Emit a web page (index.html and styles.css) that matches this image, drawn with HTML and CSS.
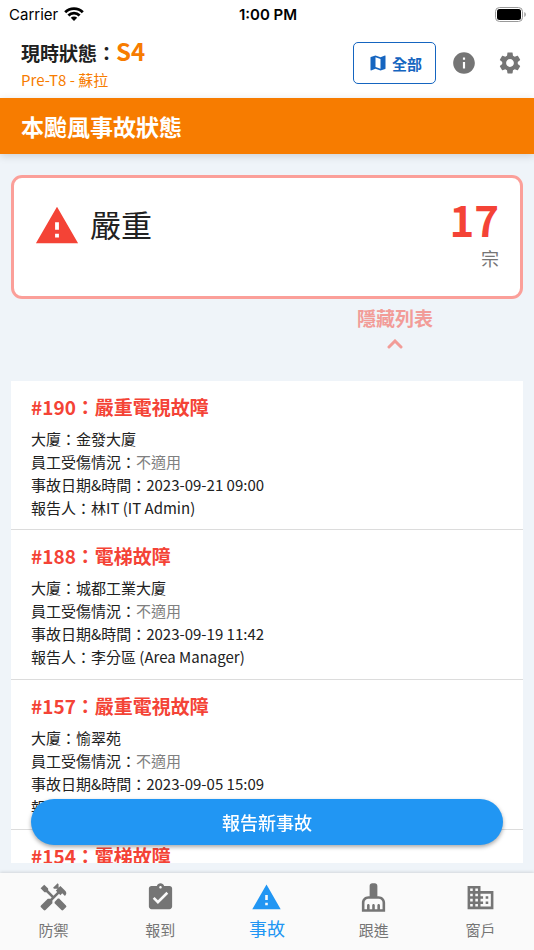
FILE: index.html
```html
<!DOCTYPE html>
<html lang="zh-Hant">
<head>
    <meta charset="UTF-8">
    <meta name="viewport" content="width=device-width, initial-scale=1.0">
    <title>本颱風事故狀態</title>
    <link rel="stylesheet" href="styles.css">
</head>
<body>
    <!-- Phone status bar -->
    <div class="status-bar">
        <div class="carrier">
            <span>Carrier</span>
            <svg class="wifi" viewBox="0 0 20 14">
                <path d="M1.2 5.2a12.4 12.4 0 0 1 17.6 0M4.4 8.4a7.9 7.9 0 0 1 11.2 0" fill="none" stroke="#000" stroke-width="2.8"/>
                <path d="M10 14l-3.2-3.3a4.6 4.6 0 0 1 6.4 0z"/>
            </svg>
        </div>
        <span class="clock">1:00 PM</span>
        <svg class="battery" viewBox="0 0 32 15">
            <rect x="0.5" y="0.5" width="27" height="14" rx="4" fill="none" stroke="#999"/>
            <rect x="2" y="2" width="24" height="11" rx="2.5"/>
            <path d="M29.3 5v5c2-.8 2-4.2 0-5z" fill="#999"/>
        </svg>
    </div>

    <header class="top-bar">
        <div class="current">
            <p class="state">現時狀態：<strong>S4</strong></p>
            <p class="typhoon">Pre-T8 - 蘇拉</p>
        </div>
        <button class="all-button">
            <svg viewBox="0 0 24 24"><path d="M20.5 3l-.16.03L15 5.1 9 3 3.36 4.9c-.21.07-.36.25-.36.48V20.5c0 .28.22.5.5.5l.16-.03L9 18.9l6 2.1 5.64-1.9c.21-.07.36-.25.36-.48V3.5c0-.28-.22-.5-.5-.5zM15 19l-6-2.11V5l6 2.11V19z"/></svg>
            全部
        </button>
        <button class="icon-button" aria-label="資訊">
            <svg viewBox="0 0 24 24"><path d="M12 2C6.48 2 2 6.48 2 12s4.48 10 10 10 10-4.48 10-10S17.52 2 12 2zm1 15h-2v-6h2v6zm0-8h-2V7h2v2z"/></svg>
        </button>
        <button class="icon-button" aria-label="設定">
            <svg viewBox="0 0 24 24"><path d="M19.14 12.94c.04-.3.06-.61.06-.94 0-.32-.02-.64-.07-.94l2.03-1.58c.18-.14.23-.41.12-.61l-1.92-3.32c-.12-.22-.37-.29-.59-.22l-2.39.96c-.5-.38-1.03-.7-1.62-.94l-.36-2.54c-.04-.24-.24-.41-.48-.41h-3.84c-.24 0-.43.17-.47.41l-.36 2.54c-.59.24-1.13.57-1.62.94l-2.39-.96c-.22-.08-.47 0-.59.22L2.74 8.87c-.12.21-.08.47.12.61l2.03 1.58c-.05.3-.09.63-.09.94s.02.64.07.94l-2.03 1.58c-.18.14-.23.41-.12.61l1.92 3.32c.12.22.37.29.59.22l2.39-.96c.5.38 1.03.7 1.62.94l.36 2.54c.05.24.24.41.48.41h3.84c.24 0 .44-.17.47-.41l.36-2.54c.59-.24 1.13-.56 1.62-.94l2.39.96c.22.08.47 0 .59-.22l1.92-3.32c.12-.22.07-.47-.12-.61l-2.01-1.58zM12 15.6c-1.98 0-3.6-1.62-3.6-3.6s1.62-3.6 3.6-3.6 3.6 1.62 3.6 3.6-1.62 3.6-3.6 3.6z"/></svg>
        </button>
    </header>

    <h1 class="banner">本颱風事故狀態</h1>

    <main>
        <section class="summary">
            <svg class="warning" viewBox="0 0 24 24"><path d="M1 21h22L12 2 1 21zm12-3h-2v-2h2v2zm0-4h-2v-4h2v4z"/></svg>
            <h2>嚴重</h2>
            <div class="count">
                <strong>17</strong>
                <span>宗</span>
            </div>
        </section>

        <button class="toggle">
            隱藏列表
            <svg viewBox="0 0 16 10"><path d="M2 8l6-6 6 6"/></svg>
        </button>

        <!-- Incident list -->
        <ul class="incidents">
            <li>
                <h3>#190：嚴重電視故障</h3>
                <p>大廈：金發大廈</p>
                <p>員工受傷情況：<span class="muted">不適用</span></p>
                <p>事故日期&amp;時間：2023-09-21 09:00</p>
                <p>報告人：林IT (IT Admin)</p>
            </li>
            <li>
                <h3>#188：電梯故障</h3>
                <p>大廈：城都工業大廈</p>
                <p>員工受傷情況：<span class="muted">不適用</span></p>
                <p>事故日期&amp;時間：2023-09-19 11:42</p>
                <p>報告人：李分區 (Area Manager)</p>
            </li>
            <li>
                <h3>#157：嚴重電視故障</h3>
                <p>大廈：愉翠苑</p>
                <p>員工受傷情況：<span class="muted">不適用</span></p>
                <p>事故日期&amp;時間：2023-09-05 15:09</p>
                <p>報告人：</p>
            </li>
            <li>
                <h3>#154：電梯故障</h3>
            </li>
        </ul>

        <button class="report-button">報告新事故</button>
    </main>

    <nav class="tabs">
        <a href="#">
            <svg viewBox="0 0 24 24"><path d="M21.67 18.17l-5.3-5.3h-.99l-2.54 2.54v.99l5.3 5.3c.39.39 1.02.39 1.41 0l2.12-2.12a.996.996 0 0 0 0-1.41z"/><path d="M17.34 10.19l1.41-1.41 2.12 2.12a3 3 0 0 0 0-4.24l-3.54-3.54-1.41 1.41V1.71L15.22 1l-3.54 3.54.71.71h2.83l-1.41 1.41 1.06 1.06-2.89 2.89-4.13-4.13V5.06L4.83 2.04 2 4.87 5.03 7.9h1.41l4.13 4.13-.85.85H7.6l-5.3 5.3a.996.996 0 0 0 0 1.41l2.12 2.12c.39.39 1.02.39 1.41 0l5.3-5.3v-2.12l5.15-5.15 1.06 1.05z"/></svg>
            防禦
        </a>
        <a href="#">
            <svg viewBox="0 0 24 24"><path d="M19 3h-4.18C14.4 1.84 13.3 1 12 1c-1.3 0-2.4.84-2.82 2H5c-1.1 0-2 .9-2 2v14c0 1.1.9 2 2 2h14c1.1 0 2-.9 2-2V5c0-1.1-.9-2-2-2zm-7 0c.55 0 1 .45 1 1s-.45 1-1 1-1-.45-1-1 .45-1 1-1zm-2 14l-4-4 1.41-1.41L10 14.17l6.59-6.59L18 9l-8 8z"/></svg>
            報到
        </a>
        <a href="#" class="active">
            <svg viewBox="0 0 24 24"><path d="M1 21h22L12 2 1 21zm12-3h-2v-2h2v2zm0-4h-2v-4h2v4z"/></svg>
            事故
        </a>
        <a href="#">
            <svg viewBox="0 0 24 24"><path d="M16 11h-1V3c0-1.1-.9-2-2-2h-2c-1.1 0-2 .9-2 2v8H8c-2.76 0-5 2.24-5 5v7h18v-7c0-2.76-2.24-5-5-5zm3 10h-2v-3c0-.55-.45-1-1-1s-1 .45-1 1v3h-2v-3c0-.55-.45-1-1-1s-1 .45-1 1v3H9v-3c0-.55-.45-1-1-1s-1 .45-1 1v3H5v-5c0-1.65 1.35-3 3-3h8c1.65 0 3 1.35 3 3v5z"/></svg>
            跟進
        </a>
        <a href="#">
            <svg viewBox="0 0 24 24"><path d="M12 7V3H2v18h20V7H12zM6 19H4v-2h2v2zm0-4H4v-2h2v2zm0-4H4V9h2v2zm0-4H4V5h2v2zm4 12H8v-2h2v2zm0-4H8v-2h2v2zm0-4H8V9h2v2zm0-4H8V5h2v2zm10 12h-8v-2h2v-2h-2v-2h2v-2h-2V9h8v10zm-2-8h-2v2h2v-2zm0 4h-2v2h2v-2z"/></svg>
            窗戶
        </a>
    </nav>
</body>
</html>
```
FILE: styles.css
```css
* {
    box-sizing: border-box;
}

body {
    display: flex;
    flex-direction: column;
    height: 100vh;
    margin: 0;
    background-color: #eff4f9;
    color: #212121;
    font-family: "Noto Sans CJK TC", sans-serif;
}

h1, h2, h3, p, ul {
    margin: 0;
    padding: 0;
}

button {
    font-family: inherit;
    border: none;
    cursor: pointer;
}

svg {
    display: block;
    flex-shrink: 0;
}

/* Status bar */
.status-bar {
    display: grid;
    grid-template-columns: 1fr auto 1fr;
    align-items: center;
    height: 28px;
    padding: 0 7px 0 9px;
    background-color: #fff;
    color: #000;
    font-family: Inter, sans-serif;
    font-size: 15px;
}

.carrier {
    display: flex;
    align-items: center;
    gap: 6px;
}

.wifi {
    width: 20px;
    height: 14px;
}

.clock {
    font-weight: 600;
}

.battery {
    justify-self: end;
    width: 32px;
    height: 15px;
}

/* Header */
.top-bar {
    display: flex;
    align-items: center;
    height: 70px;
    padding: 0 11px 0 21px;
    background-color: #fff;
}

.current {
    flex: 1;
    padding-top: 2px;
}

.state {
    font-size: 19px;
    font-weight: 700;
    line-height: 30px;
}

.state strong {
    color: #f77c00;
    font-size: 24px;
    font-weight: 700;
}

.typhoon {
    color: #f77c00;
    font-size: 15px;
    line-height: 24px;
}

.all-button {
    display: flex;
    align-items: center;
    gap: 4px;
    height: 42px;
    padding: 0 13px 0 14px;
    border: 1px solid #1565c0;
    border-radius: 5px;
    background-color: #fff;
    color: #1565c0;
    font-size: 15px;
    font-weight: 700;
}

.all-button svg {
    width: 20px;
    height: 20px;
    fill: #1565c0;
}

.icon-button {
    margin-left: 15px;
    padding: 0;
    background: none;
}

.icon-button + .icon-button {
    margin-left: 20px;
}

.icon-button svg {
    width: 26px;
    height: 26px;
    fill: #757575;
}

.banner {
    padding: 0 21px;
    background-color: #f77c00;
    box-shadow: 0 2px 8px rgba(0, 0, 0, 0.15);
    color: #fff;
    font-size: 23px;
    font-weight: 700;
    line-height: 56px;
}

/* Content */
main {
    display: flex;
    flex: 1;
    flex-direction: column;
    min-height: 0;
    padding: 21px 11px 10px;
    position: relative;
}

.summary {
    display: flex;
    align-items: flex-start;
    height: 124px;
    padding: 20px 21px 0 20px;
    border: 3px solid #fb9f99;
    border-radius: 11px;
    background-color: #fff;
}

.warning {
    width: 46px;
    height: 46px;
    margin-top: 5px;
    fill: #f44336;
}

.summary h2 {
    flex: 1;
    padding-left: 10px;
    font-size: 31px;
    font-weight: 400;
    line-height: 52px;
}

.count {
    display: flex;
    flex-direction: column;
    align-items: flex-end;
}

.count strong {
    color: #f44336;
    font-size: 42px;
    line-height: 42px;
}

.count span {
    color: #757575;
    font-size: 18px;
    line-height: 36px;
}

.toggle {
    display: flex;
    flex-direction: column;
    align-items: center;
    align-self: flex-end;
    gap: 6px;
    width: 50%;
    margin-bottom: 32px;
    padding: 4px 0 0;
    background: none;
    color: #f29c98;
    font-size: 19px;
    font-weight: 700;
    line-height: 30px;
}

.toggle svg {
    width: 16px;
    height: 10px;
    fill: none;
    stroke: #f29c98;
    stroke-width: 3;
    stroke-linecap: round;
}

.incidents {
    flex: 1;
    min-height: 0;
    overflow-y: auto;
    scrollbar-width: none;
    background-color: #fff;
    list-style: none;
}

.incidents li {
    padding: 11px 20px 10px;
    border-bottom: 1px solid #dcdcdc;
    font-size: 15px;
    line-height: 23px;
}

.incidents li + li {
    padding-bottom: 11px;
}

.incidents h3 {
    margin-bottom: 5px;
    color: #f44336;
    font-size: 19px;
    font-weight: 700;
    line-height: 30px;
}

.muted {
    color: #808080;
}

/* Floats over the list */
.report-button {
    position: absolute;
    right: 31px;
    bottom: 28px;
    left: 31px;
    height: 46px;
    border-radius: 23px;
    background-color: #2196f3;
    box-shadow: 0 2px 4px rgba(0, 0, 0, 0.35);
    color: #fff;
    font-size: 18px;
    font-weight: 500;
}

/* Bottom tabs */
.tabs {
    display: flex;
    height: 77px;
    background-color: #fafafa;
    box-shadow: 0 -1px 3px rgba(0, 0, 0, 0.12);
}

.tabs a {
    display: flex;
    flex: 1;
    flex-direction: column;
    align-items: center;
    gap: 5px;
    padding-top: 9px;
    color: #757575;
    font-size: 15px;
    line-height: 24px;
    text-decoration: none;
}

.tabs svg {
    width: 31px;
    height: 31px;
    fill: #757575;
}

.tabs .active {
    gap: 3px;
    color: #2196f3;
    font-size: 18px;
}

.tabs .active svg {
    fill: #2196f3;
}
```
